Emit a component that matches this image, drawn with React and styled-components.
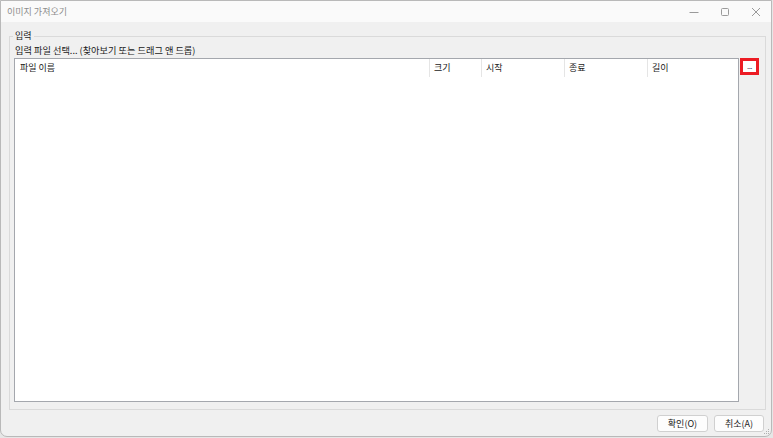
import React from "react";
import styled, { createGlobalStyle } from "styled-components";

const Global = createGlobalStyle`
  html, body { margin: 0; padding: 0; background: #e4e4e4; }
  body { font-family: "Noto Sans CJK KR", "Noto Sans", sans-serif; }
  * { box-sizing: border-box; }
`;

const Screen = styled.div`
  width: 773px;
  height: 438px;
  background: #e6e6e6;
  overflow: hidden;
`;

const Window = styled.div`
  width: 772px;
  height: 437px;
  border: 1px solid #b9b9b9;
  border-radius: 0 0 7px 7px;
  overflow: hidden;
  display: flex;
  flex-direction: column;
  background: #f0f0f0;
  font-size: 9px;
  color: #1a1a1a;
`;

const TitleBar = styled.div`
  height: 21px;
  flex: none;
  background: #fafafa;
  display: flex;
  align-items: center;
  padding-left: 6px;
`;

const Title = styled.div`
  flex: 1;
  color: #8c8c8c;
  font-size: 9px;
  line-height: 12px;
  padding-top: 1px;
`;

const Controls = styled.div`
  display: flex;
  height: 100%;
`;

const CtrlBtn = styled.div`
  width: 31px;
  height: 100%;
  display: flex;
  align-items: center;
  justify-content: center;
`;

const Body = styled.div`
  flex: 1;
  min-height: 0;
  display: flex;
  flex-direction: column;
  padding: 8px 5px 0 8px;
`;

const Group = styled.fieldset`
  flex: 1;
  min-height: 0;
  margin: 0;
  border: 1px solid #dadada;
  padding: 2px 6px 7px 4px;
  display: flex;
  flex-direction: column;
`;

const Legend = styled.legend`
  padding: 0 2px;
  margin-left: -1px;
  font-size: 9px;
  line-height: 12px;
  color: #1a1a1a;
`;

const Label = styled.div`
  font-size: 9.2px;
  line-height: 12px;
  margin-bottom: 2px;
  padding-left: 1px;
`;

const Row = styled.div`
  flex: 1;
  min-height: 0;
  display: flex;
  align-items: flex-start;
  gap: 1px;
`;

const ListView = styled.div`
  flex: 1;
  align-self: stretch;
  background: #ffffff;
  border: 1px solid #a4a7ad;
`;

const Header = styled.div`
  display: grid;
  grid-template-columns: 415px 52px 83px 83px 1fr;
  height: 18px;
`;

const HeaderCell = styled.div`
  padding-left: ${(p) => p.$pad}px;
  line-height: 18px;
  font-size: 9px;
  color: #1a1a1a;
  border-right: ${(p) => (p.$last ? "none" : "1px solid #e5e5e5")};
`;

const BrowseBtn = styled.div`
  width: 19px;
  height: 17px;
  border: 3px solid #ec1c24;
  background: #ffffff;
  display: flex;
  align-items: center;
  justify-content: center;
  font-size: 8px;
  line-height: 8px;
  color: #4a3a5a;
  padding-bottom: 1px;
  letter-spacing: -0.5px;
`;

const Footer = styled.div`
  height: 26px;
  flex: none;
  display: flex;
  justify-content: flex-end;
  align-items: flex-start;
  gap: 6px;
  padding: 5px 7px 0 0;
  position: relative;
`;

const Button = styled.div`
  width: ${(p) => p.$w}px;
  height: 17px;
  border: 1px solid #d0d0d0;
  border-radius: 3px;
  background: #fdfdfd;
  display: flex;
  align-items: center;
  justify-content: center;
  font-size: 9px;
  line-height: 12px;
  color: #1a1a1a;
`;

const Grip = styled.svg`
  position: absolute;
  right: 1px;
  bottom: 1px;
`;

export default function App() {
  return (
    <Screen>
      <Global />
      <Window>
        <TitleBar>
          <Title>이미지 가져오기</Title>
          <Controls>
            <CtrlBtn>
              <svg width="10" height="10" viewBox="0 0 10 10">
                <line x1="0.5" y1="5.5" x2="9.5" y2="5.5" stroke="#9a9a9a" strokeWidth="1" />
              </svg>
            </CtrlBtn>
            <CtrlBtn>
              <svg width="10" height="10" viewBox="0 0 10 10">
                <rect x="1.5" y="1.5" width="7" height="7" rx="1" fill="none" stroke="#9a9a9a" strokeWidth="1" />
              </svg>
            </CtrlBtn>
            <CtrlBtn>
              <svg width="10" height="10" viewBox="0 0 10 10">
                <path d="M1 1L9 9M9 1L1 9" stroke="#9a9a9a" strokeWidth="1" />
              </svg>
            </CtrlBtn>
          </Controls>
        </TitleBar>
        <Body>
          <Group>
            <Legend>입력</Legend>
            <Label>입력 파일 선택... (찾아보기 또는 드래그 앤 드롭)</Label>
            <Row>
              <ListView>
                <Header>
                  <HeaderCell $pad={5}>파일 이름</HeaderCell>
                  <HeaderCell $pad={4}>크기</HeaderCell>
                  <HeaderCell $pad={4}>시작</HeaderCell>
                  <HeaderCell $pad={4}>종료</HeaderCell>
                  <HeaderCell $pad={4} $last>길이</HeaderCell>
                </Header>
              </ListView>
              <BrowseBtn>...</BrowseBtn>
            </Row>
          </Group>
        </Body>
        <Footer>
          <Button $w={51}>확인(O)</Button>
          <Button $w={50}>취소(A)</Button>
          <Grip width="7" height="7" viewBox="0 0 7 7">
            <rect x="5" y="1" width="1" height="1" fill="#b0b0b0" />
            <rect x="3" y="3" width="1" height="1" fill="#b0b0b0" />
            <rect x="5" y="3" width="1" height="1" fill="#b0b0b0" />
            <rect x="1" y="5" width="1" height="1" fill="#b0b0b0" />
            <rect x="3" y="5" width="1" height="1" fill="#b0b0b0" />
            <rect x="5" y="5" width="1" height="1" fill="#b0b0b0" />
          </Grip>
        </Footer>
      </Window>
    </Screen>
  );
}
